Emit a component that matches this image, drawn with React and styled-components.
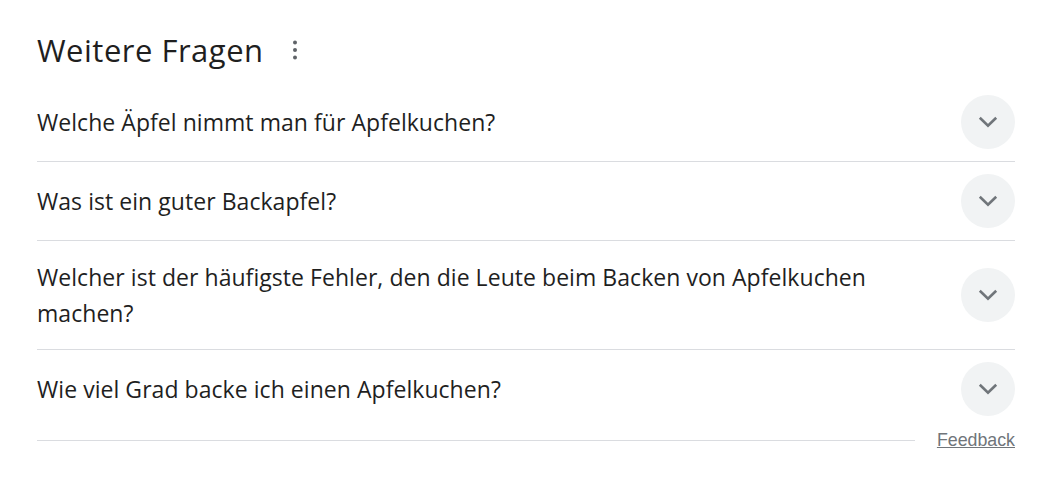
import styled, { createGlobalStyle } from "styled-components";

const GlobalStyle = createGlobalStyle`
  body {
    margin: 0;
    background: #fff;
    font-family: "Open Sans", Roboto, Arial, sans-serif;
  }
`;

const Container = styled.div`
  width: 978px;
  padding: 0 38px 0 37px;
`;

const Header = styled.div`
  display: flex;
  align-items: center;
  box-sizing: border-box;
  height: 83px;
  padding-top: 16px;
`;

const Title = styled.h2`
  margin: 0;
  font-size: 31px;
  font-weight: 400;
  color: #1f1f1f;
  line-height: 36px;
  letter-spacing: 0.5px;
`;

const MenuButton = styled.div`
  display: flex;
  align-items: center;
  justify-content: center;
  width: 24px;
  height: 24px;
  margin-left: 19px;
  color: #5f6368;
`;

const Row = styled.div`
  display: flex;
  align-items: center;
  justify-content: space-between;
  min-height: 78px;
  border-bottom: ${(props) => (props.$last ? "none" : "1px solid #dadce0")};
`;

const Question = styled.div`
  font-size: 23px;
  line-height: 36px;
  letter-spacing: 0.05px;
  color: #1f1f1f;
  padding: 18px 0;
  max-width: 880px;
`;

const Toggle = styled.div`
  flex-shrink: 0;
  width: 54px;
  height: 54px;
  border-radius: 50%;
  background: #f1f3f4;
  display: flex;
  align-items: center;
  justify-content: center;
  color: #70757a;
`;

const Footer = styled.div`
  display: flex;
  align-items: center;
  height: 24px;
`;

const Line = styled.div`
  flex: 1;
  height: 1px;
  background: #dadce0;
  margin-right: 22px;
`;

const FeedbackLink = styled.a`
  font-family: "Liberation Sans", Arial, sans-serif;
  font-size: 17.8px;
  color: #70757a;
  text-decoration: underline;
  line-height: 20px;
`;

const Chevron = () => (
  <svg width="24" height="24" viewBox="0 0 24 24" fill="none">
    <path
      d="M3.8 7.8 12 15.8l8.2-8"
      stroke="currentColor"
      strokeWidth="2.6"
    />
  </svg>
);

const Dots = () => (
  <svg width="24" height="24" viewBox="0 0 24 24" fill="currentColor">
    <circle cx="12" cy="4.5" r="2" />
    <circle cx="12" cy="12" r="2" />
    <circle cx="12" cy="19.5" r="2" />
  </svg>
);

const questions = [
  "Welche Äpfel nimmt man für Apfelkuchen?",
  "Was ist ein guter Backapfel?",
  "Welcher ist der häufigste Fehler, den die Leute beim Backen von Apfelkuchen machen?",
  "Wie viel Grad backe ich einen Apfelkuchen?",
];

const App = () => {
  return (
    <Container>
      <GlobalStyle />
      <Header>
        <Title>Weitere Fragen</Title>
        <MenuButton>
          <Dots />
        </MenuButton>
      </Header>
      {questions.map((q, i) => (
        <Row key={q} $last={i === questions.length - 1}>
          <Question>{q}</Question>
          <Toggle>
            <Chevron />
          </Toggle>
        </Row>
      ))}
      <Footer>
        <Line />
        <FeedbackLink>Feedback</FeedbackLink>
      </Footer>
    </Container>
  );
};

export default App;
